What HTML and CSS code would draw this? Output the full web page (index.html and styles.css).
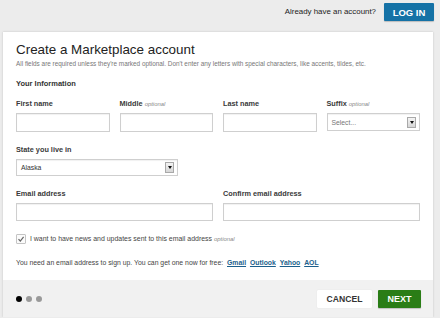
FILE: index.html
```html
<!DOCTYPE html>
<html>
<head>
<meta charset="utf-8">
<link rel="stylesheet" href="styles.css">
</head>
<body>
<header class="topbar">
  <span class="have">Already have an account?</span>
  <button class="login">LOG IN</button>
</header>
<main class="card">
  <div class="body">
    <h1 class="title">Create a Marketplace account</h1>
    <p class="sub">All fields are required unless they're marked optional. Don't enter any letters with special characters, like accents, tildes, etc.</p>
    <h2 class="section">Your Information</h2>
    <div class="grid row1">
      <div class="field">
        <label class="lbl">First name</label>
        <div class="input"></div>
      </div>
      <div class="field">
        <label class="lbl">Middle <em class="opt">optional</em></label>
        <div class="input"></div>
      </div>
      <div class="field">
        <label class="lbl">Last name</label>
        <div class="input"></div>
      </div>
      <div class="field">
        <label class="lbl">Suffix <em class="opt">optional</em></label>
        <div class="input select short"><span class="ph">Select...</span><span class="arrow"><span class="tri"></span></span></div>
      </div>
    </div>
    <div class="field state">
      <label class="lbl">State you live in</label>
      <div class="input select stsel"><span class="val">Alaska</span><span class="arrow"><span class="tri"></span></span></div>
    </div>
    <div class="grid row3">
      <div class="field span2">
        <label class="lbl">Email address</label>
        <div class="input em"></div>
      </div>
      <div class="field span2">
        <label class="lbl">Confirm email address</label>
        <div class="input em"></div>
      </div>
    </div>
    <div class="check">
      <span class="box"><svg width="8" height="8" viewBox="0 0 8 8"><path d="M1.5 4.2 L3.3 6 L6.6 1.8" fill="none" stroke="#666" stroke-width="1.2"/></svg></span>
      <span class="ctext">I want to have news and updates sent to this email address <em class="opt">optional</em></span>
    </div>
    <p class="help">You need an email address to sign up. You can get one now for free: <a class="lnk">Gmail</a> <a class="lnk">Outlook</a> <a class="lnk">Yahoo</a> <a class="lnk">AOL</a></p>
  </div>
  <footer class="foot">
    <div class="dots"><span class="dot on"></span><span class="dot"></span><span class="dot"></span></div>
    <div class="btns">
      <button class="cancel">CANCEL</button>
      <button class="next">NEXT</button>
    </div>
  </footer>
</main>
</body>
</html>
```
FILE: styles.css
```css
html, body {
  margin: 0;
  padding: 0;
  background: #ececec;
  font-family: "Liberation Sans", Arial, sans-serif;
  color: #333;
}
.topbar {
  height: 29px;
  padding-top: 3px;
  padding-right: 6px;
  display: flex;
  justify-content: flex-end;
  align-items: flex-start;
}
.have {
  font-size: 7.9px;
  color: #222;
  line-height: 18px;
  margin-right: 8px;
}
.login {
  width: 50px;
  height: 18px;
  border: 0;
  border-radius: 1px;
  background: #1572a6;
  color: #fff;
  font-family: inherit;
  font-weight: bold;
  font-size: 9.5px;
  padding: 0;
  box-shadow: 0 1px 1px rgba(0,0,0,.2);
}
.card {
  margin-left: 3px;
  width: 430px;
  background: #fff;
  box-shadow: 0 0 2px rgba(0,0,0,.18);
}
.body {
  padding: 10px 13px 12px;
}
.title {
  margin: 0;
  font-weight: normal;
  font-size: 13.4px;
  line-height: 16px;
  color: #222;
}
.sub {
  margin: 2px 0 0;
  font-size: 6.4px;
  line-height: 8px;
  color: #777;
  white-space: nowrap;
}
.section {
  margin: 11px 0 0;
  font-size: 7.5px;
  line-height: 10px;
  font-weight: bold;
  color: #333;
}
.grid {
  display: grid;
  grid-template-columns: repeat(4, 1fr);
  column-gap: 10px;
}
.row1 { margin-top: 10px; }
.span2 { grid-column: span 2; }
.field {
  display: flex;
  flex-direction: column;
}
.lbl {
  font-size: 7.3px;
  line-height: 10px;
  font-weight: bold;
  color: #3a3a3a;
  margin-bottom: 4px;
}
.opt {
  font-weight: normal;
  font-style: italic;
  font-size: 5.9px;
  color: #888;
}
.input {
  height: 19px;
  box-sizing: border-box;
  border: 1px solid #cfcfcf;
  background: #fff;
  box-shadow: inset 0 1px 1px rgba(0,0,0,.06);
}
.select {
  display: flex;
  align-items: center;
  padding: 0 3px 0 4px;
  font-size: 6.8px;
}
.short { height: 18px; }
.ph { color: #777; }
.val { color: #333; }
.arrow {
  margin-left: auto;
  width: 9px;
  height: 11px;
  box-sizing: border-box;
  border: 1px solid #a9a9a9;
  background: linear-gradient(#f4f4f4, #d6d6d6);
  display: flex;
  align-items: center;
  justify-content: center;
}
.tri {
  width: 0;
  height: 0;
  border-left: 2px solid transparent;
  border-right: 2px solid transparent;
  border-top: 3px solid #111;
}
.state {
  margin-top: 13px;
}
.stsel {
  width: 162px;
  height: 17px;
}
.row3 { margin-top: 13px; }
.em { height: 18px; }
.check {
  margin-top: 12px;
  display: flex;
  align-items: center;
  height: 11px;
}
.box {
  width: 10px;
  height: 10px;
  box-sizing: border-box;
  border: 1px solid #c4c4c4;
  border-radius: 1px;
  display: flex;
  align-items: center;
  justify-content: center;
  margin-right: 4px;
  background: #fbfbfb;
}
.ctext {
  font-size: 6.95px;
  color: #444;
}
.help {
  margin: 14px 0 0;
  font-size: 6.85px;
  line-height: 10px;
  color: #444;
  white-space: nowrap;
}
.lnk {
  color: #1b5f8c;
  font-weight: bold;
  text-decoration: underline;
  margin-left: 2px;
}
.foot {
  height: 37px;
  background: #f1f1f1;
  display: flex;
  align-items: center;
  justify-content: space-between;
  padding: 0 12px 0 13px;
}
.dots {
  display: flex;
  gap: 4px;
}
.dot {
  width: 6px;
  height: 6px;
  border-radius: 50%;
  background: #999;
}
.dot.on { background: #000; }
.btns {
  display: flex;
  gap: 6px;
}
.cancel, .next {
  height: 18px;
  border: 0;
  padding: 0;
  font-family: inherit;
  font-weight: bold;
  border-radius: 1px;
}
.cancel {
  width: 55px;
  background: #fff;
  color: #333;
  font-size: 8.6px;
  box-shadow: 0 0 1px rgba(0,0,0,.15);
}
.next {
  width: 43px;
  background: #2a7d16;
  color: #fff;
  font-size: 9px;
  box-shadow: 0 1px 1px rgba(0,0,0,.2);
}
```
